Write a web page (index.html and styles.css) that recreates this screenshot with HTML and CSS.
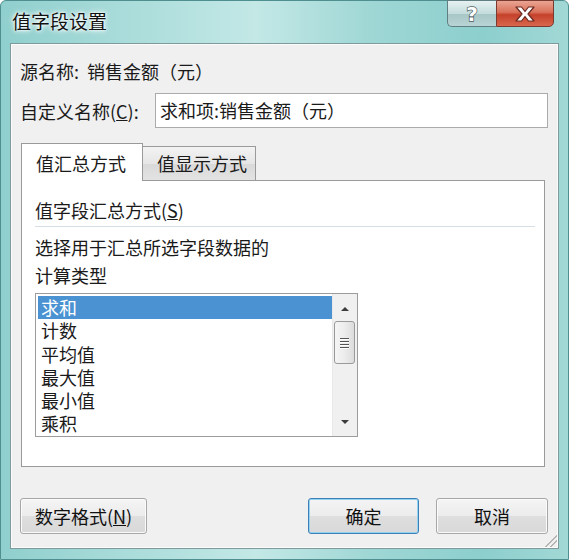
FILE: index.html
```html
<!DOCTYPE html>
<html lang="zh-CN">
<head>
<meta charset="utf-8">
<title>值字段设置</title>
<link rel="stylesheet" href="styles.css">
</head>
<body>
<div class="window">
  <div class="titlebar">
    <div class="title">值字段设置</div>
    <div class="caption-btns">
      <div class="cbtn help"><span class="qmark">?</span></div>
      <div class="cbtn close">
        <svg width="22" height="16" viewBox="0 0 22 16"><path d="M2 1 H7.5 L11 5.5 L14.5 1 H20 L14 8 L20 15 H14.5 L11 10.5 L7.5 15 H2 L8 8 Z" fill="#fff" stroke="#6b2a22" stroke-width="1.2" stroke-linejoin="round"/></svg>
      </div>
    </div>
  </div>
  <div class="client">
    <div class="row source">源名称:&nbsp;&nbsp;销售金额（元）</div>
    <div class="row custom">
      <span class="label">自定义名称(<u>C</u>):</span>
      <div class="input">求和项:销售金额（元）</div>
    </div>
    <div class="tabs">
      <div class="tab active">值汇总方式</div>
      <div class="tab">值显示方式</div>
    </div>
    <div class="panel">
      <div class="heading">值字段汇总方式(<u>S</u>)</div>
      <div class="sep"></div>
      <div class="desc">选择用于汇总所选字段数据的<br>计算类型</div>
      <div class="listbox">
        <div class="items">
          <div class="item selected">求和</div>
          <div class="item">计数</div>
          <div class="item">平均值</div>
          <div class="item">最大值</div>
          <div class="item">最小值</div>
          <div class="item">乘积</div>
        </div>
        <div class="scrollbar">
          <div class="arrow up"></div>
          <div class="thumb"><span></span><span></span><span></span><span></span></div>
          <div class="track"></div>
          <div class="arrow down"></div>
        </div>
      </div>
    </div>
    <div class="buttons">
      <div class="btn numfmt">数字格式(<u>N</u>)</div>
      <div class="spacer"></div>
      <div class="btn ok">确定</div>
      <div class="btn cancel">取消</div>
    </div>
    <div class="grip"></div>
  </div>
</div>
</body>
</html>
```
FILE: styles.css
```css
* { box-sizing: border-box; }
html, body { margin: 0; padding: 0; background: #fff; }
body {
  font-family: "Noto Sans CJK SC", "Noto Sans", sans-serif;
  font-size: 18px;
  color: #1a1a1a;
}
.window {
  width: 569px;
  height: 560px;
  background: linear-gradient(90deg, #8fcfcd 0%, #a7dbd9 20%, #c3e8e6 45%, #9fd7d5 65%, #8ccfcd 85%, #a2d8d6 100%);
  border: 1px solid #4f8f8f;
  border-radius: 6px 6px 0 0;
  padding: 0 9px 10px 9px;
  display: flex;
  flex-direction: column;
}
.titlebar {
  height: 42px;
  display: flex;
  justify-content: space-between;
  align-items: flex-start;
}
.title {
  margin-top: 8px;
  margin-left: 2px;
  font-size: 19px;
  line-height: 24px;
  color: #111;
  text-shadow: 0 0 6px #fff, 0 0 4px #fff, 0 0 2px #fff;
}
.caption-btns {
  display: flex;
  margin-right: 5px;
  margin-top: -1px;
}
.cbtn {
  height: 27px;
  border: 1px solid #5f7f80;
  display: flex;
  align-items: center;
  justify-content: center;
}
.help {
  width: 49px;
  border-radius: 0 0 0 5px;
  border-right: none;
  background: linear-gradient(180deg, #e6f1f1 0%, #c4dcdc 50%, #a7c6c6 51%, #b9d4d4 100%);
}
.qmark {
  font-family: "DejaVu Sans", sans-serif;
  font-weight: bold;
  font-size: 20px;
  line-height: 20px;
  color: #fff;
  -webkit-text-stroke: 1.3px #4a5a5a;
  paint-order: stroke fill;
}
.close {
  width: 58px;
  border-radius: 0 0 5px 0;
  background: linear-gradient(180deg, #eaa493 0%, #d9715a 45%, #c5412a 55%, #d8674d 100%);
  border-color: #7a3a30;
}
.client {
  position: relative;
  flex: 1;
  background: #f0f0f0;
  border: 1px solid #7e9a9a;
  box-shadow: inset 0 0 0 1px #fbfbfb;
  padding: 0 10px 0 9px;
  display: flex;
  flex-direction: column;
}
.row { display: flex; align-items: center; }
.source {
  margin-top: 15px;
  height: 24px;
  line-height: 24px;
}
.custom {
  margin-top: 10px;
  height: 35px;
}
.label { width: 135px; }
.input {
  width: 393px;
  height: 35px;
  background: #fff;
  border: 1px solid #ababab;
  padding-left: 4px;
  line-height: 33px;
}
.tabs {
  margin-top: 15px;
  margin-left: 1px;
  display: flex;
  align-items: flex-end;
  height: 37px;
  position: relative;
  z-index: 1;
}
.tab {
  height: 34px;
  width: 114px;
  border: 1px solid #9a9a9a;
  border-bottom: none;
  background: linear-gradient(180deg, #f3f3f3 0%, #e6e6e6 50%, #d9d9d9 51%, #e3e3e3 100%);
  padding-left: 14px;
  line-height: 33px;
  margin-left: -1px;
}
.tab.active {
  height: 38px;
  width: 122px;
  margin-left: 0;
  margin-bottom: -1px;
  background: #fff;
  padding-left: 14px;
  line-height: 38px;
  position: relative;
  z-index: 2;
}
.panel {
  margin-left: 1px;
  width: 524px;
  height: 287px;
  background: #fff;
  border: 1px solid #9a9a9a;
  padding: 16px 10px 0 13px;
}
.heading { line-height: 26px; height: 26px; }
.sep {
  margin-top: 3px;
  height: 1px;
  background: #d5dfe5;
  width: 500px;
}
.desc {
  margin-top: 6px;
  line-height: 28px;
}
.listbox {
  margin-top: 4px;
  width: 323px;
  height: 144px;
  border: 1px solid #9c9c9c;
  display: flex;
  padding: 2px 0 2px 2px;
}
.items { flex: 1; }
.item {
  height: 23.3px;
  line-height: 23px;
  padding-left: 3px;
}
.item.selected {
  background: #4a92d2;
  color: #fff;
}
.scrollbar {
  width: 25px;
  margin: -2px 0 -2px 0;
  background: #f0f0f0;
  border-left: 1px solid #e8e8e8;
  display: flex;
  flex-direction: column;
  align-items: center;
}
.arrow {
  width: 0; height: 0;
  border-left: 4px solid transparent;
  border-right: 4px solid transparent;
  margin-left: -1px;
}
.arrow.up { border-bottom: 4px solid #3c3c3c; margin-top: 13px; }
.arrow.down { border-top: 4px solid #3c3c3c; margin-bottom: 12px; }
.thumb {
  margin-top: 10px;
  width: 21px;
  height: 43px;
  border: 1px solid #9a9a9a;
  border-radius: 3px;
  background: linear-gradient(90deg, #f5f5f5 0%, #ececec 50%, #dcdcdc 100%);
  display: flex;
  flex-direction: column;
  align-items: center;
  justify-content: center;
  gap: 2px;
  margin-left: -1px;
}
.thumb span {
  width: 9px;
  height: 1px;
  background: #555;
  box-shadow: 0 1px 0 #fff;
}
.track { flex: 1; }
.buttons {
  margin-top: 31px;
  display: flex;
  height: 36px;
}
.btn {
  height: 36px;
  border: 1px solid #a7a7a7;
  border-radius: 3px;
  background: linear-gradient(180deg, #f4f4f4 0%, #ececec 50%, #dedede 51%, #d9d9d9 100%);
  box-shadow: inset 0 0 0 1px #fbfbfb;
  display: flex;
  align-items: center;
  justify-content: center;
  color: #111;
}
.numfmt { width: 127px; margin-left: 0; }
.spacer { flex: 1; }
.ok {
  width: 111px;
  border-color: #3d7fb6;
  box-shadow: inset 0 0 0 1px #93d2f0;
}
.cancel { width: 112px; margin-left: 17px; margin-right: 0; }
.grip {
  position: absolute;
  right: 1px;
  bottom: 1px;
  width: 12px;
  height: 12px;
  background: linear-gradient(135deg, transparent 50%, #b5b5b5 50%, #b5b5b5 58%, transparent 58%, transparent 70%, #b5b5b5 70%, #b5b5b5 78%, transparent 78%);
}
```
